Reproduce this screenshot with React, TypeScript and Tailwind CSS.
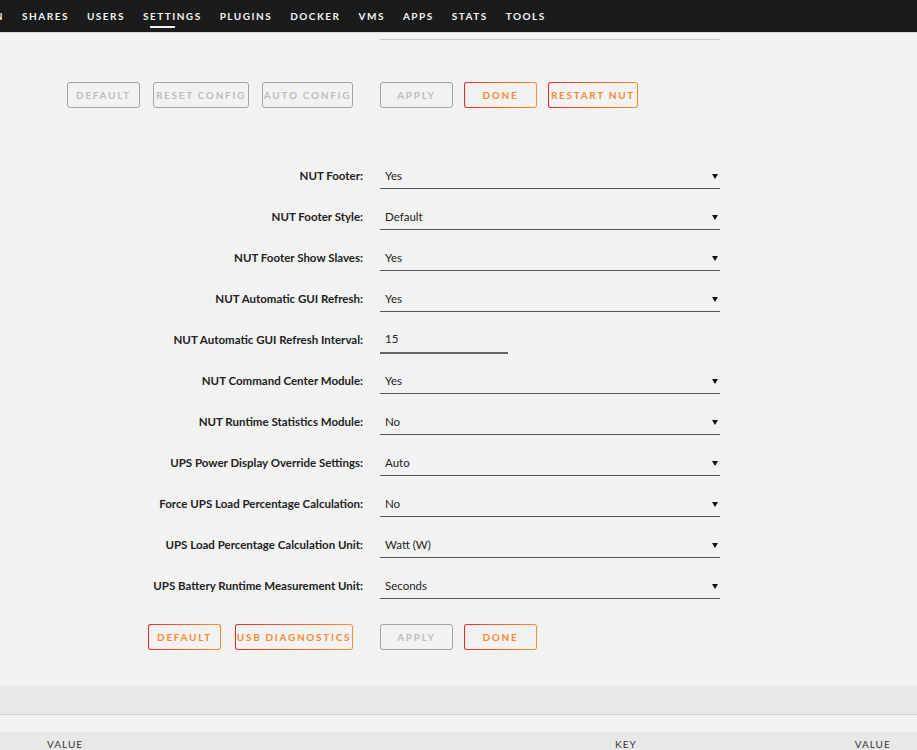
const navItems = ["Main", "Shares", "Users", "Settings", "Plugins", "Docker", "VMs", "Apps", "Stats", "Tools"];

type Row = { label: string; value: string; kind?: "select" | "input" };

const rows: Row[] = [
  { label: "NUT Footer:", value: "Yes" },
  { label: "NUT Footer Style:", value: "Default" },
  { label: "NUT Footer Show Slaves:", value: "Yes" },
  { label: "NUT Automatic GUI Refresh:", value: "Yes" },
  { label: "NUT Automatic GUI Refresh Interval:", value: "15", kind: "input" },
  { label: "NUT Command Center Module:", value: "Yes" },
  { label: "NUT Runtime Statistics Module:", value: "No" },
  { label: "UPS Power Display Override Settings:", value: "Auto" },
  { label: "Force UPS Load Percentage Calculation:", value: "No" },
  { label: "UPS Load Percentage Calculation Unit:", value: "Watt (W)" },
  { label: "UPS Battery Runtime Measurement Unit:", value: "Seconds" },
];

function Btn({ label, active, w }: { label: string; active?: boolean; w: string }) {
  if (active) {
    return (
      <div className={`rounded-[3px] bg-gradient-to-r from-[#e22828] to-[#ff8c2f] p-px ${w}`}>
        <div className="flex h-[24px] items-center justify-center rounded-[2px] bg-[#f2f2f2] text-[10px] font-bold uppercase tracking-[1.7px] text-[#f58a32]">
          {label}
        </div>
      </div>
    );
  }
  return (
    <div
      className={`flex h-[26px] items-center justify-center rounded-[3px] border border-[#a3a3a3] bg-[#f2f2f2] text-[10px] font-bold uppercase tracking-[1.7px] text-[#bdbdbd] ${w}`}
    >
      {label}
    </div>
  );
}

function Arrow() {
  return (
    <svg width="6" height="6" viewBox="0 0 6 6" className="mr-[2px]">
      <polygon points="0,1 6,1 3,6" fill="#111" />
    </svg>
  );
}

function FormRow({ row }: { row: Row }) {
  return (
    <div className="flex h-[41px] items-start">
      <div className="flex h-[24px] w-[363px] items-center justify-end text-[11.5px] font-bold text-[#222]">{row.label}</div>
      <div className="ml-[17px]">
        {row.kind === "input" ? (
          <div className="flex h-[26px] w-[128px] items-center border-b-2 border-[#666] pb-[2px] pl-[5px] text-[11.5px] text-[#222]">
            {row.value}
          </div>
        ) : (
          <div className="flex h-[25px] w-[340px] items-center justify-between border-b border-[#555] pb-[1px] pl-[5px] text-[11.5px] text-[#222]">
            <span>{row.value}</span>
            <Arrow />
          </div>
        )}
      </div>
    </div>
  );
}

export default function App() {
  return (
    <div className="h-[750px] w-[917px] overflow-hidden bg-[#f2f2f2]" style={{ fontFamily: "Lato, 'Noto Sans', sans-serif" }}>
      <header className="flex h-[33px] items-center overflow-hidden border-b border-[#d8d8d8] bg-[#1c1b1b]">
        <nav className="-ml-[29px] flex shrink-0 items-center gap-[18px]">
          {navItems.map((item) => (
            <div key={item} className="relative text-[10px] font-bold uppercase tracking-[1.5px] text-[#f2f2f2]">
              {item}
              {item === "Settings" && (
                <div className="absolute left-[7px] top-[17px] h-[2px] w-[25px] bg-[#f2f2f2]" />
              )}
            </div>
          ))}
        </nav>
      </header>

      <div className="flex h-[8px]">
        <div className="w-[380px]" />
        <div className="h-[7px] w-[340px] border-b border-[#c8c8c8]" />
      </div>

      <div className="mt-[41px] flex">
        <div className="flex w-[363px] justify-end gap-[13px] pr-[10px]">
          <Btn label="Default" w="w-[73px]" />
          <Btn label="Reset Config" w="w-[96px]" />
          <Btn label="Auto Config" w="w-[91px]" />
        </div>
        <div className="ml-[17px] flex gap-[11px]">
          <Btn label="Apply" w="w-[73px]" />
          <Btn label="Done" active w="w-[73px]" />
          <Btn label="Restart NUT" active w="w-[90px]" />
        </div>
      </div>

      <div className="mt-[56px]">
        {rows.map((r) => (
          <FormRow key={r.label} row={r} />
        ))}
      </div>

      <div className="mt-[9px] flex">
        <div className="flex w-[363px] justify-end gap-[14px] pr-[10px]">
          <Btn label="Default" active w="w-[73px]" />
          <Btn label="USB Diagnostics" active w="w-[118px]" />
        </div>
        <div className="ml-[17px] flex gap-[11px]">
          <Btn label="Apply" w="w-[73px]" />
          <Btn label="Done" active w="w-[73px]" />
        </div>
      </div>

      <div className="mt-[35px] h-[30px] border-b border-[#d4d4d4] bg-[#e8e8e8]" />
      <div className="h-[17px]" />
      <div className="flex h-[20px] items-center bg-[#e8e8e8] pt-[4px] text-[10px] uppercase tracking-[1px] text-[#333]">
        <span className="ml-[47px]">Value</span>
        <span className="ml-[532px]">Key</span>
        <span className="ml-[218px]">Value</span>
      </div>
    </div>
  );
}
